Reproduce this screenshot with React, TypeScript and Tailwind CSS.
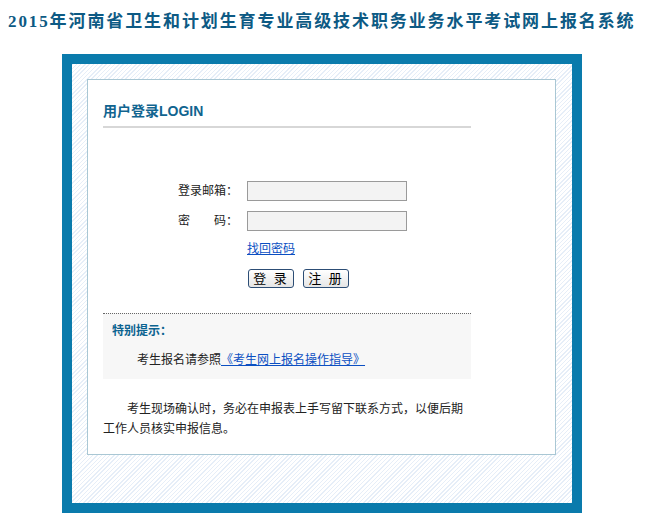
import React from "react";

const cjk = "font-['Liberation_Sans','Noto_Sans_CJK_SC',sans-serif]";

function FormRow({ label, type }: { label: string; type: string }) {
  return (
    <div className="flex h-[20px] items-center">
      <span className="w-[135px] whitespace-pre text-right text-[12px] leading-[16px] text-[#222]">
        {label}
      </span>
      <input
        type={type}
        className="ml-[9px] h-[20px] w-[160px] border border-[#9a9a9a] bg-[#f3f3f3] px-1 text-[12px] outline-none"
      />
    </div>
  );
}

function PlainButton({ children }: { children: React.ReactNode }) {
  return (
    <button
      type="button"
      className="flex h-[19px] w-[46px] items-center justify-center rounded-[3px] border border-[#2c4d75] bg-gradient-to-b from-white to-[#e6e6e6] text-[13px] leading-none tracking-[2px] text-black"
    >
      {children}
    </button>
  );
}

export default function App() {
  return (
    <div className={`min-h-[524px] w-[649px] bg-white ${cjk}`}>
      <h1 className="h-[54px] pl-[8px] pt-[12px] font-['Liberation_Serif','Noto_Sans_CJK_SC',serif] text-[17px] font-bold leading-[20px] tracking-[1.9px] text-[#0d5a84]">
        2015年河南省卫生和计划生育专业高级技术职务业务水平考试网上报名系统
      </h1>

      <div className="ml-[62px] w-[520px] border-[10px] border-[#0a7bac] bg-[repeating-linear-gradient(135deg,#e6eef8_0px,#e6eef8_1px,#ffffff_1px,#ffffff_3px)] pb-[48px] pl-[15px] pr-[16px] pt-[15px]">
        <div className="border border-[#a9c7d4] bg-white pb-[15px] pl-[15px]">
          <div className="w-[368px]">
            <div className="h-[48px] border-b-2 border-[#d7d7d7] pt-[21px] text-[14px] font-bold leading-[20px] text-[#10648f]">
              用户登录LOGIN
            </div>

            <div className="mt-[53px] flex flex-col gap-[10px]">
              <FormRow label="登录邮箱：" type="text" />
              <FormRow label={"密\u3000\u3000码："} type="password" />
            </div>

            <div className="mt-[10px] pl-[144px] text-[12px] leading-[16px]">
              <a href="#" className="text-[#0b4fc2] underline">
                找回密码
              </a>
            </div>

            <div className="mt-[12px] flex gap-[9px] pl-[145px]">
              <PlainButton>登 录</PlainButton>
              <PlainButton>注 册</PlainButton>
            </div>

            <div className="mt-[25px] h-[66px] border-t border-dotted border-[#666] bg-[#f7f7f7] pt-[9px] text-[12px] leading-[16px]">
              <div className="pl-[9px] font-bold text-[#0b6390]">特别提示：</div>
              <div className="mt-[13px] pl-[34px] text-[#222]">
                考生报名请参照
                <a href="#" className="text-[#0b4fc2] underline">
                  《考生网上报名操作指导》
                </a>
              </div>
            </div>

            <p className="mt-[20px] indent-[24px] text-[12px] leading-[20px] text-[#222]">
              考生现场确认时，务必在申报表上手写留下联系方式，以便后期工作人员核实申报信息。
            </p>
          </div>
        </div>
      </div>
    </div>
  );
}
